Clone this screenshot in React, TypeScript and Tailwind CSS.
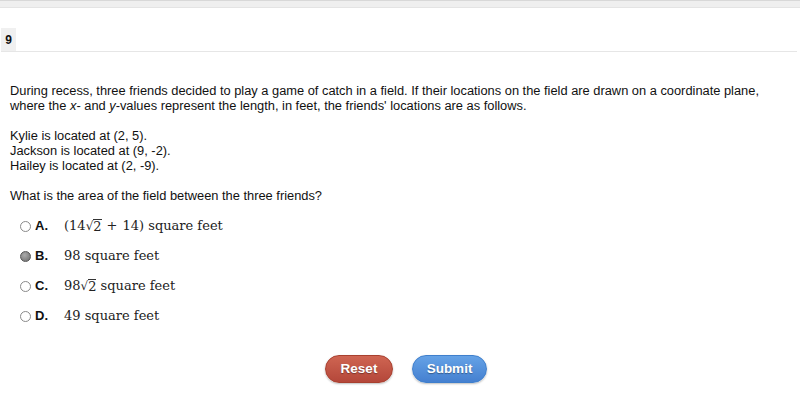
import type { ReactNode } from 'react'

const sans = { fontFamily: '"Liberation Sans", Arial, sans-serif' }
const serif = { fontFamily: '"DejaVu Serif", "Liberation Serif", serif' }

function Sqrt({ children }: { children: ReactNode }) {
  return (
    <span className="inline-flex items-start">
      <span className="text-[12px] leading-[15px]">√</span>
      <span className="border-t border-[#333] leading-[13px]">{children}</span>
    </span>
  )
}

type Option = { letter: string; selected?: boolean; body: ReactNode }

const options: Option[] = [
  {
    letter: 'A',
    body: (
      <>
        (14<Sqrt>2</Sqrt>
        <span className="mx-[5px]">+</span>14) square feet
      </>
    ),
  },
  { letter: 'B', selected: true, body: <>98 square feet</> },
  {
    letter: 'C',
    body: (
      <>
        98<Sqrt>2</Sqrt> square feet
      </>
    ),
  },
  { letter: 'D', body: <>49 square feet</> },
]

function Radio({ selected }: { selected?: boolean }) {
  return selected ? (
    <span className="block h-[11px] w-[11px] rounded-full border border-[#555] bg-[radial-gradient(circle_at_40%_35%,#aaa,#6b6b6b)]" />
  ) : (
    <span className="block h-[11px] w-[11px] rounded-full border border-[#8a8a8a] bg-white" />
  )
}

export default function App() {
  return (
    <div className="h-[418px] w-[800px] overflow-hidden bg-white text-[#111]" style={sans}>
      <div className="h-[8px] border-t border-[#d8d8d8] border-b border-b-[#e4e4e4] bg-[#efefef]" />

      <div className="mx-[1px] mt-[20px] mr-[3px] flex border-b border-[#e6e6e6]">
        <div className="flex h-[23px] w-[15px] items-center justify-center bg-[#f0f0f0] text-[12px] font-bold">9</div>
      </div>

      <div className="mt-[31px] px-[10px] text-[12.85px] leading-[15px]">
        <p>
          During recess, three friends decided to play a game of catch in a field. If their locations on the field are drawn on a
          coordinate plane, where the <i>x</i>- and <i>y</i>-values represent the length, in feet, the friends' locations are as
          follows.
        </p>
        <p className="mt-[15px]">
          Kylie is located at (2, 5).
          <br />
          Jackson is located at (9, -2).
          <br />
          Hailey is located at (2, -9).
        </p>
        <p className="mt-[15px]">What is the area of the field between the three friends?</p>
      </div>

      <div className="mt-[8px] flex flex-col pl-[20px]">
        {options.map((o) => (
          <div key={o.letter} className="flex h-[30px] items-center">
            <Radio selected={o.selected} />
            <span className="ml-[4px] w-[29px] text-[13px] font-bold">{o.letter}.</span>
            <span className="text-[13px] text-[#222]" style={serif}>
              {o.body}
            </span>
          </div>
        ))}
      </div>

      <div className="mt-[24px] flex justify-center gap-[19px] pl-[12px]">
        <button className="h-[28px] w-[68px] rounded-full border border-[#a8402f] bg-gradient-to-b from-[#cf6552] to-[#b4473a] text-[13.5px] font-bold text-white shadow-[0_1px_2px_rgba(0,0,0,0.25)] [text-shadow:0_1px_1px_rgba(0,0,0,0.35)]">
          Reset
        </button>
        <button className="h-[28px] w-[75px] rounded-full border border-[#3f7fcc] bg-gradient-to-b from-[#65a2e6] to-[#4580d0] text-[13.5px] font-bold text-white shadow-[0_1px_2px_rgba(0,0,0,0.25)] [text-shadow:0_1px_1px_rgba(0,0,0,0.35)]">
          Submit
        </button>
      </div>
    </div>
  )
}
